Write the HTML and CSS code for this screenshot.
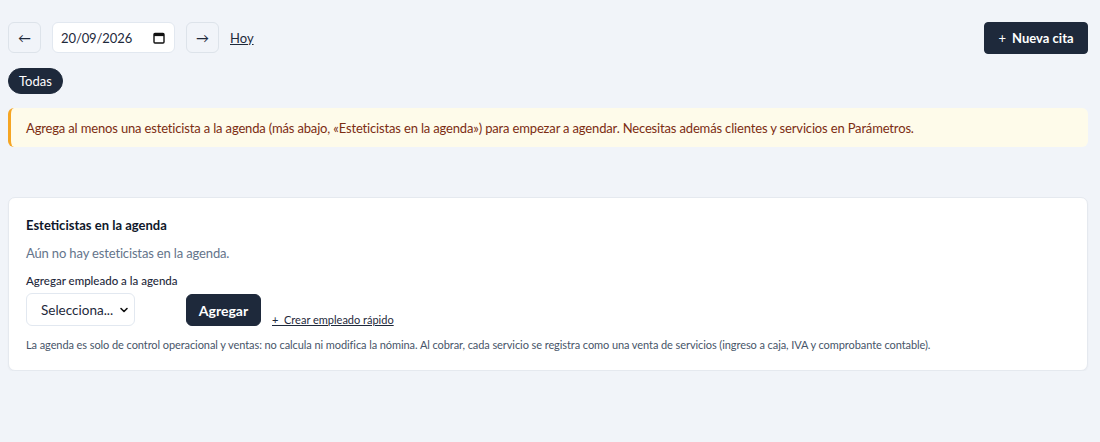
FILE: index.html
```html
<!DOCTYPE html>
<html lang="es">
<head>
<meta charset="utf-8">
<title>Agenda</title>
<link rel="stylesheet" href="styles.css">
</head>
<body>
<div class="page">
  <div class="toolbar">
    <button class="nav-btn" type="button">←</button>
    <div class="date-field">
      <span class="date-text">20/09/2026</span>
      <svg class="cal-icon" width="12" height="12" viewBox="0 0 12 12" aria-hidden="true">
        <rect x="1" y="1.5" width="10" height="9.5" rx="1" fill="none" stroke="#111" stroke-width="1.4"/>
        <rect x="1" y="1.5" width="10" height="2.6" fill="#111"/>
      </svg>
    </div>
    <button class="nav-btn" type="button">→</button>
    <a class="today-link" href="#">Hoy</a>
    <button class="primary-btn new-btn" type="button"><span class="plus">+</span> Nueva cita</button>
  </div>

  <div class="filters">
    <button class="pill active" type="button">Todas</button>
  </div>

  <div class="alert">Agrega al menos una esteticista a la agenda (más abajo, «Esteticistas en la agenda») para empezar a agendar. Necesitas además clientes y servicios en Parámetros.</div>

  <section class="card">
    <h2 class="card-title">Esteticistas en la agenda</h2>
    <p class="empty">Aún no hay esteticistas en la agenda.</p>
    <label class="field-label">Agregar empleado a la agenda</label>
    <div class="add-row">
      <div class="select">
        <span>Selecciona...</span>
        <svg width="10" height="10" viewBox="0 0 10 10" aria-hidden="true"><path d="M2 3.5 L5 6.5 L8 3.5" fill="none" stroke="#111" stroke-width="1.6" stroke-linecap="round" stroke-linejoin="round"/></svg>
      </div>
      <button class="primary-btn add-btn" type="button">Agregar</button>
      <a class="quick-link" href="#">+&nbsp; Crear empleado rápido</a>
    </div>
    <p class="note">La agenda es solo de control operacional y ventas: no calcula ni modifica la nómina. Al cobrar, cada servicio se registra como una venta de servicios (ingreso a caja, IVA y comprobante contable).</p>
  </section>
</div>
</body>
</html>
```

FILE: styles.css
```css
* { box-sizing: border-box; }
html, body { margin: 0; padding: 0; }
body {
  background: #f1f4f9;
  font-family: "Segoe UI", "Lato", "Noto Sans", sans-serif;
  color: #1e293b;
}
.page { padding: 22px 12px 0 8px; }

.toolbar { display: flex; align-items: center; height: 31px; }
.nav-btn {
  width: 33px; height: 31px;
  border: 1px solid #dde3ea; border-radius: 6px;
  background: #f1f4f9; color: #1e293b;
  font-size: 13px; font-family: inherit; padding: 0;
  display: flex; align-items: center; justify-content: center;
}
.date-field {
  margin: 0 11px; width: 123px; height: 31px;
  background: #fff; border: 1px solid #e2e8f0; border-radius: 6px;
  display: flex; align-items: center; justify-content: space-between;
  padding: 0 9px 0 8px; font-size: 13px; letter-spacing: -0.1px; color: #1e293b;
}
.cal-icon { display: block; }
.today-link { margin-left: 11px; font-size: 13px; color: #1e293b; text-decoration: underline; }
.primary-btn {
  background: #1e293b; color: #fff; border: 1px solid #1e293b;
  font-family: inherit; font-weight: 700; cursor: pointer;
}
.new-btn {
  margin-left: auto; width: 104px; height: 32px; border-radius: 4px;
  font-size: 13px; padding: 0;
}
.new-btn .plus { font-weight: 400; margin-right: 3px; }

.filters { margin-top: 15px; display: flex; }
.pill {
  height: 26px; padding: 0 10px; border-radius: 13px;
  font-family: inherit; font-size: 13px;
}
.pill.active { background: #1e293b; color: #fff; border: 1px solid #1e293b; }

.alert {
  margin-top: 14px; height: 39px;
  background: #fefbea; border-left: 3px solid #f5a524; border-radius: 6px;
  display: flex; align-items: center; padding: 0 15px;
  font-size: 13px; letter-spacing: -0.16px; color: #7c2d12;
}

.card {
  margin-top: 50px;
  background: #fff; border: 1px solid #e5e9ef; border-radius: 7px;
  padding: 18px 17px 17px;
  box-shadow: 0 1px 2px rgba(15, 23, 42, 0.04);
}
.card-title { margin: 0; font-size: 13px; font-weight: 700; color: #0f172a; line-height: 18px; }
.empty { margin: 9px 0 0; font-size: 13px; letter-spacing: -0.15px; color: #64748b; line-height: 20px; }
.field-label { display: block; margin-top: 10px; font-size: 11.5px; font-weight: 500; color: #1e293b; line-height: 16px; }
.add-row { display: flex; align-items: flex-end; margin-top: 4px; }
.select {
  width: 109px; height: 33px; background: #fff;
  border: 1px solid #e2e8f0; border-radius: 6px;
  display: flex; align-items: center; justify-content: space-between;
  padding: 0 5px 0 14px; font-size: 13.5px; color: #1e293b;
}
.add-btn {
  margin-left: 51px; width: 75px; height: 32px; border-radius: 6px;
  font-size: 14px; padding: 0;
}
.quick-link {
  margin-left: 11px; font-size: 11px; color: #1e293b; line-height: 14px;
  text-decoration: underline; margin-bottom: -1px;
}
.note { margin: 11px 0 0; font-size: 11px; letter-spacing: -0.08px; color: #475569; line-height: 16px; }
```
